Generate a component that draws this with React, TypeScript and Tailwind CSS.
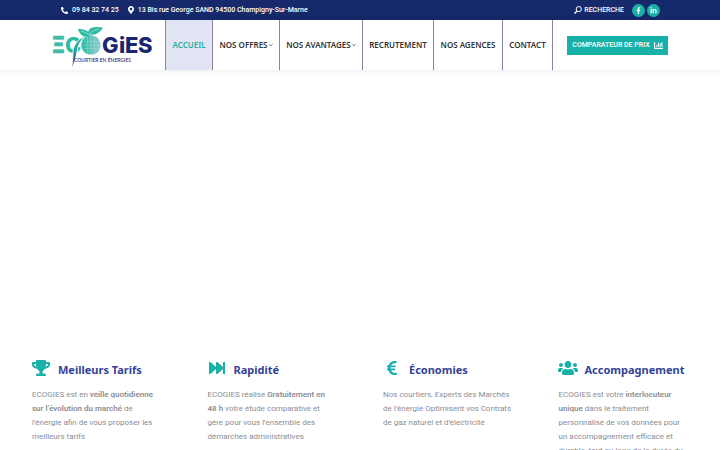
import type { ReactNode } from "react";
import type { IconType } from "react-icons";
import {
  FaChartBar,
  FaEuroSign,
  FaFacebookF,
  FaFastForward,
  FaLinkedinIn,
  FaMapMarkerAlt,
  FaPhoneAlt,
  FaTrophy,
  FaUsers,
} from "react-icons/fa";
import { clsx } from "clsx";

type NavItem = {
  label: string;
  width: string;
  active?: boolean;
  hasMenu?: boolean;
};

const NAV_ITEMS: NavItem[] = [
  { label: "ACCUEIL", width: "w-[47px]", active: true },
  { label: "NOS OFFRES", width: "w-[67px]", hasMenu: true },
  { label: "NOS AVANTAGES", width: "w-[83px]", hasMenu: true },
  { label: "RECRUTEMENT", width: "w-[71px]" },
  { label: "NOS AGENCES", width: "w-[69px]" },
  { label: "CONTACT", width: "w-[50px]" },
];

type Feature = {
  title: string;
  icon: IconType;
  iconSize: string;
  text: ReactNode;
};

const FEATURES: Feature[] = [
  {
    title: "Meilleurs Tarifs",
    icon: FaTrophy,
    iconSize: "size-[18px]",
    text: (
      <>
        ECOGIES est en <strong>veille quotidienne sur l’évolution du marché</strong> de
        l’énergie afin de vous proposer les meilleurs tarifs
      </>
    ),
  },
  {
    title: "Rapidité",
    icon: FaFastForward,
    iconSize: "size-4",
    text: (
      <>
        ECOGIES réalise <strong>Gratuitement en 48&nbsp;h</strong> votre étude comparative
        et gère pour vous l’ensemble des démarches administratives
      </>
    ),
  },
  {
    title: "Économies",
    icon: FaEuroSign,
    iconSize: "size-4",
    text: (
      <>
        Nos courtiers, Experts des Marchés de l’énergie Optimisent vos Contrats de gaz
        naturel et d’électricité
      </>
    ),
  },
  {
    title: "Accompagnement",
    icon: FaUsers,
    iconSize: "size-5",
    text: (
      <>
        ECOGIES est votre <strong>interlocuteur unique</strong> dans le traitement
        personnalisé de vos données pour un accompagnement efficace et durable, tout au
        long de la durée du contrat
      </>
    ),
  },
];

export default function App() {
  return (
    <div className="h-screen overflow-hidden bg-white font-[Roboto,sans-serif]">
      <TopBar />
      <Header />
      <main className="pt-[288px]">
        <section className="grid grid-cols-4 gap-x-[46px] px-8">
          {FEATURES.map((feature) => (
            <FeatureCard key={feature.title} feature={feature} />
          ))}
        </section>
      </main>
    </div>
  );
}

function TopBar() {
  return (
    <div className="flex h-5 items-center bg-[#15296b] pr-[60px] pl-[61px] text-[7px] font-medium text-white">
      <a href="tel:0984327425" className="flex items-center gap-1">
        <FaPhoneAlt className="size-[7px]" />
        09 84 32 74 25
      </a>
      <span className="ml-2 flex items-center gap-[3px]">
        <FaMapMarkerAlt className="size-2" />
        13 Bis rue George SAND 94500 Champigny-Sur-Marne
      </span>
      <a href="#recherche" className="ml-auto flex items-center gap-[2px]">
        <SearchIcon />
        RECHERCHE
      </a>
      <div className="ml-2 flex gap-[2px]">
        <SocialLink label="Facebook" icon={FaFacebookF} />
        <SocialLink label="LinkedIn" icon={FaLinkedinIn} />
      </div>
    </div>
  );
}

function SearchIcon() {
  return (
    <svg viewBox="0 0 8 8" className="size-2" fill="none" stroke="currentColor" aria-hidden="true">
      <circle cx="4.8" cy="3.1" r="2.6" strokeWidth="1" />
      <path d="M3 5 .5 7.6" strokeWidth="1.4" />
    </svg>
  );
}

function SocialLink({ label, icon: Icon }: { label: string; icon: IconType }) {
  return (
    <a
      href={`#${label.toLowerCase()}`}
      aria-label={label}
      className="flex size-[13px] items-center justify-center rounded-full bg-[#18b1a8]"
    >
      <Icon className="size-[7px]" />
    </a>
  );
}

function Header() {
  return (
    <header className="flex h-[50px] items-center bg-white pr-[52px] pl-[51px] shadow-[0_0_6px_rgba(0,0,0,0.1)]">
      <a href="#accueil" aria-label="ECOGIES" className="shrink-0">
        <Logo />
      </a>
      <nav className="ml-3 flex h-full border-l border-[#8785a5] font-['Noto_Sans',sans-serif] text-[8px] font-semibold text-[#333]">
        {NAV_ITEMS.map((item) => (
          <a
            key={item.label}
            href="#"
            className={clsx(
              "flex shrink-0 items-center justify-center border-r border-[#8785a5] whitespace-nowrap",
              item.width,
              item.active && "bg-[#e1e4f2] text-[#18b1a8]",
            )}
          >
            {item.label}
            {item.hasMenu && <MenuCaret />}
          </a>
        ))}
      </nav>
      <button
        type="button"
        className="ml-auto flex h-[19px] w-[101px] shrink-0 items-center justify-center gap-1 bg-[#18b1a8] text-[7px] font-medium whitespace-nowrap text-white"
      >
        COMPARATEUR DE PRIX
        <FaChartBar className="size-[9px]" />
      </button>
    </header>
  );
}

function MenuCaret() {
  return (
    <svg viewBox="0 0 4 4" className="ml-px size-1" fill="none" stroke="currentColor" aria-hidden="true">
      <path d="M.4 1.3 2 2.7l1.6-1.4" strokeWidth=".7" />
    </svg>
  );
}

function Logo() {
  return (
    <svg viewBox="0 0 102 44" className="h-11 w-[102px]" aria-hidden="true">
      <defs>
        <linearGradient id="globe" x1="0" x2="1">
          <stop offset="0" stopColor="#2dbba2" />
          <stop offset="1" stopColor="#8fcdd3" />
        </linearGradient>
        <linearGradient id="stem" x1="0" x2="0" y1="0" y2="1">
          <stop offset="0" stopColor="#2dbba2" />
          <stop offset=".5" stopColor="#2a9fa0" />
          <stop offset="1" stopColor="#1b2c70" />
        </linearGradient>
      </defs>
      <text
        x="0"
        y="30"
        fill="#3fbba8"
        stroke="#3fbba8"
        strokeWidth=".6"
        fontFamily="'DejaVu Sans', sans-serif"
        fontWeight="700"
        fontSize="23"
      >
        Ξ
      </text>
      <g fontFamily="Inter, sans-serif" fontWeight="800" fontSize="22">
        <text x="14" y="30" fill="#2dbba2">C</text>
        <text x="51" y="30" fill="#1b2670">G</text>
        <text x="68" y="30" fill="#1b2670">i</text>
        <text x="74" y="30" fill="#1b2670">E</text>
        <text x="87" y="30" fill="#1b2670">S</text>
      </g>
      <circle cx="40" cy="22" r="9.8" fill="url(#globe)" />
      <path
        d="M31 18.5h18M30.5 22h19M31 25.5h18M36.5 13v18M40 12.5v19M43.5 13v18"
        stroke="#fff"
        strokeOpacity=".3"
        strokeWidth=".6"
      />
      <path
        d="M40 10C31 14 27 21 26 29c-1 6-3 11-5 17 0-6 1-10 1-17 0-8 7-15 18-19Z"
        fill="url(#stem)"
        stroke="#fff"
        strokeWidth=".9"
      />
      <path d="M39 13C34 15 29 13 27 6c6 0 11 1 12 7Z" fill="#2dbba2" />
      <path d="M37 11C37 4 43 3 52 4.5c-3 5-8 9-15 6.5Z" fill="#2dbba2" />
      <path d="M38 11c3-3 6-4 10-5M30 8c3 1 6 2 8 4" stroke="#fff" strokeWidth=".4" fill="none" />
      <text x="23" y="39" fill="#1b2670" fontFamily="Lato, sans-serif" fontWeight="500" fontSize="5">
        COURTIER EN ÉNERGIES
      </text>
    </svg>
  );
}

function FeatureCard({ feature }: { feature: Feature }) {
  const Icon = feature.icon;

  return (
    <article>
      <div className="flex items-start gap-2">
        <span className="flex h-[19px] w-[18px] shrink-0 items-center justify-center text-[#18b1a8]">
          <Icon className={clsx("shrink-0", feature.iconSize)} />
        </span>
        <h2 className="pt-[2px] font-['Noto_Sans',sans-serif] text-[11px] leading-5 font-bold whitespace-nowrap text-[#344395]">
          {feature.title}
        </h2>
      </div>
      <p className="mt-2 text-[8px] leading-[14px] text-[#8b8d94] [&_strong]:font-semibold">
        {feature.text}
      </p>
    </article>
  );
}
